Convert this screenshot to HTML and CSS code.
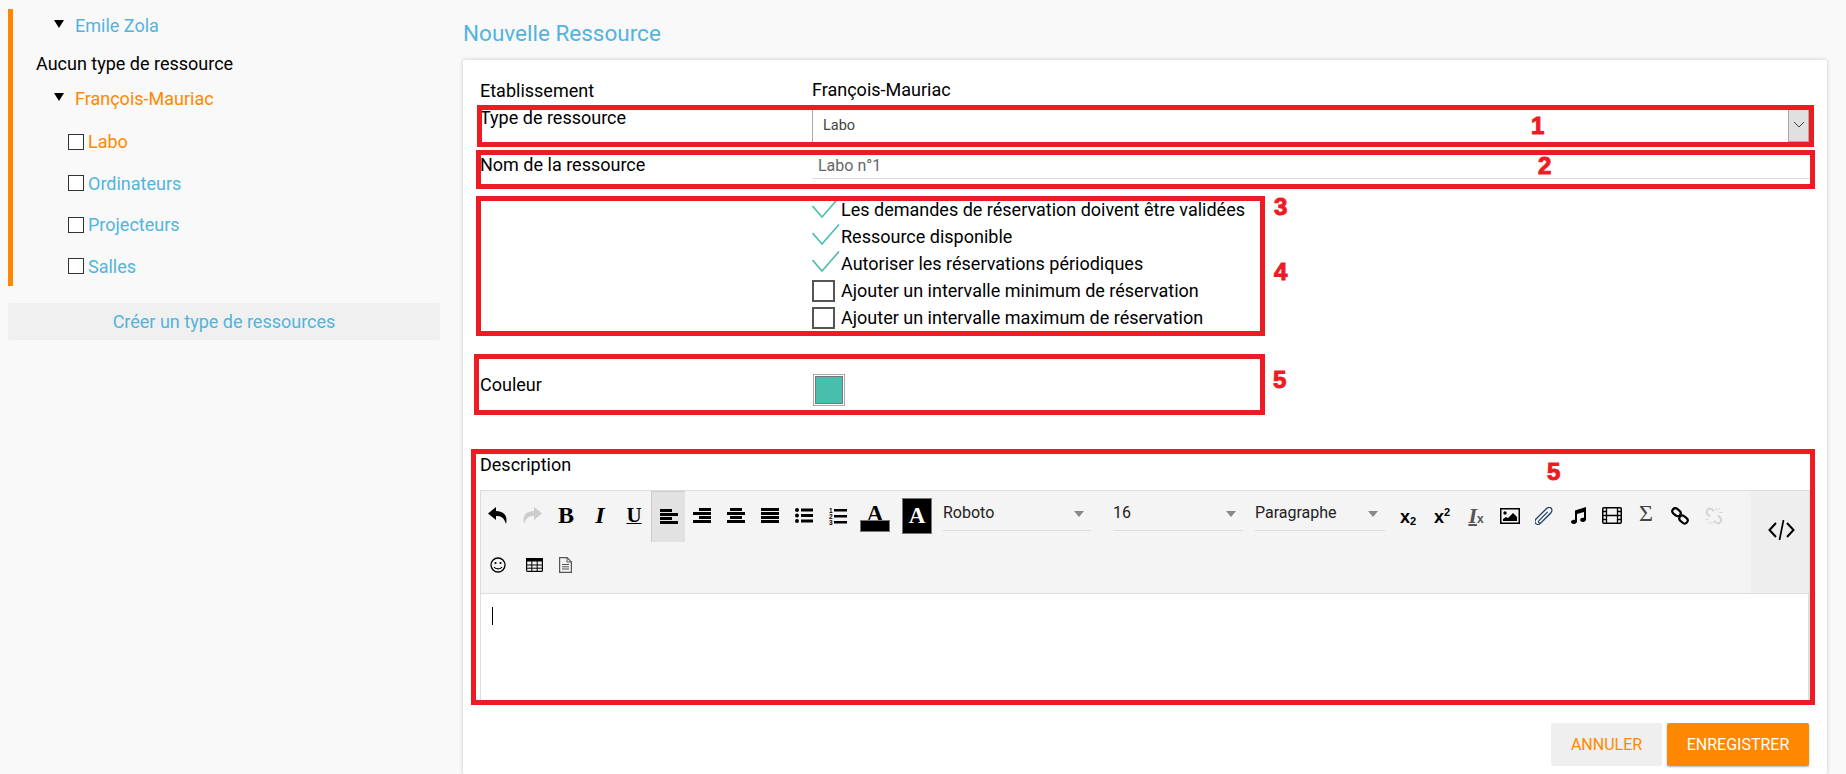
FILE: index.html
```html
<!DOCTYPE html>
<html lang="fr">
<head>
    <meta charset="UTF-8">
    <title>Nouvelle Ressource</title>
    <link rel="stylesheet" href="styles.css">
</head>
<body>

<div class="sidebar">
    <div class="tree">
        <div class="tree-struct"><span class="arrow"></span><a class="link">Emile Zola</a></div>
        <div class="tree-none">Aucun type de ressource</div>
        <div class="tree-struct second"><span class="arrow"></span><a class="link active">François-Mauriac</a></div>
        <div class="tree-type"><span class="box"></span><a class="link active">Labo</a></div>
        <div class="tree-type"><span class="box"></span><a class="link">Ordinateurs</a></div>
        <div class="tree-type"><span class="box"></span><a class="link">Projecteurs</a></div>
        <div class="tree-type"><span class="box"></span><a class="link">Salles</a></div>
    </div>
    <div class="create-type">Créer un type de ressources</div>
</div>

<div class="main">
    <h1>Nouvelle Ressource</h1>
    <div class="card">
        <div class="row row-etab">
            <label>Etablissement</label>
            <div class="etab-name">François-Mauriac</div>
        </div>
        <div class="row row-type">
            <label>Type de ressource</label>
            <div class="select">
                <span class="select-val">Labo</span>
                <span class="select-btn">
                    <svg width="12" height="7" viewBox="0 0 12 7"><path d="M1 1l5 5 5-5" fill="none" stroke="#444" stroke-width="1"/></svg>
                </span>
            </div>
        </div>
        <div class="row row-name">
            <label>Nom de la ressource</label>
            <input class="name-input" type="text" value="Labo n°1">
        </div>
        <div class="row checks">
            <div></div>
            <div>
                <div class="check"><svg class="tick" viewBox="0 0 28 21"><path d="M.5 9L10 20 27 .5" fill="none" stroke="#4abdac" stroke-width="1.600"/></svg><span>Les demandes de réservation doivent être validées</span></div>
                <div class="check"><svg class="tick" viewBox="0 0 28 21"><path d="M.5 9L10 20 27 .5" fill="none" stroke="#4abdac" stroke-width="1.600"/></svg><span>Ressource disponible</span></div>
                <div class="check"><svg class="tick" viewBox="0 0 28 21"><path d="M.5 9L10 20 27 .5" fill="none" stroke="#4abdac" stroke-width="1.600"/></svg><span>Autoriser les réservations périodiques</span></div>
                <div class="check"><span class="unchecked"></span><span>Ajouter un intervalle minimum de réservation</span></div>
                <div class="check"><span class="unchecked"></span><span>Ajouter un intervalle maximum de réservation</span></div>
            </div>
        </div>
        <div class="row row-color">
            <label>Couleur</label>
            <div class="swatch"><span></span></div>
        </div>
        <div class="desc-label">Description</div>

        <div class="editor">
            <div class="toolbar">
                <div class="tb-rows">
                    <div class="tb-row">
                        <span class="tb"><svg width="20" height="17" viewBox="0 0 20 17"><path d="M8 0L0 6.500 8 13V9c5 0 8 1.500 10 8 2-8-2-13-10-13z"/></svg></span>
                        <span class="tb"><svg width="20" height="17" viewBox="0 0 20 17"><path fill="#ccc" d="M12 0l8 6.500L12 13V9C7 9 4 10.500 2 17 0 9 4 4 12 4z"/></svg></span>
                        <span class="tb serif-b">B</span>
                        <span class="tb serif-i">I</span>
                        <span class="tb serif-u">U</span>
                        <span class="tb on"><svg width="18" height="15" viewBox="0 0 18 15"><path d="M0 0h12v3H0zM0 4h18v3H0zM0 8h12v3H0zM0 12h18v3H0z"/></svg></span>
                        <span class="tb"><svg width="18" height="15" viewBox="0 0 18 15"><path d="M6 0h12v3H6zM0 4h18v3H0zM6 8h12v3H6zM0 12h18v3H0z"/></svg></span>
                        <span class="tb"><svg width="18" height="15" viewBox="0 0 18 15"><path d="M3 0h12v3H3zM0 4h18v3H0zM3 8h12v3H3zM0 12h18v3H0z"/></svg></span>
                        <span class="tb"><svg width="18" height="15" viewBox="0 0 18 15"><path d="M0 0h18v3H0zM0 4h18v3H0zM0 8h18v3H0zM0 12h18v3H0z"/></svg></span>
                        <span class="tb"><svg width="18" height="15" viewBox="0 0 18 15"><circle cx="2" cy="2" r="2"/><circle cx="2" cy="7.500" r="2"/><circle cx="2" cy="13" r="2"/><path d="M6 .5h12v3H6zM6 6h12v3H6zM6 11.500h12v3H6z"/></svg></span>
                        <span class="tb"><svg width="18" height="18" viewBox="0 0 18 18"><text x="0" y="5.500" class="ol-num">1</text><text x="0" y="11.500" class="ol-num">2</text><text x="0" y="17.500" class="ol-num">3</text><path d="M5 2h13v2.500H5zM5 8h13v2.500H5zM5 14h13v2.500H5z"/></svg></span>
                        <span class="color-a"><span>A</span><i></i></span>
                        <span class="bg-a">A</span>
                        <span class="drop drop-font">Roboto</span>
                        <span class="drop drop-size">16</span>
                        <span class="drop drop-para">Paragraphe</span>
                        <span class="tb script"><span>x<sub>2</sub></span></span>
                        <span class="tb script"><span>x<sup>2</sup></span></span>
                        <span class="tb clear"><span class="clear-box"><b>I</b><i>x</i></span></span>
                        <span class="tb"><svg width="20" height="16" viewBox="0 0 20 16"><rect x=".75" y=".75" width="18.500" height="14.500" fill="none" stroke="#000" stroke-width="1.500"/><circle cx="5" cy="5" r="1.700"/><path d="M3 13v-2l3-2 2 1 5-5 4 4v4z"/></svg></span>
                        <span class="tb"><svg width="18" height="18" viewBox="2.500 .5 14.500 15"><path d="M15.500 5.500L6.800 14.200c-1.200 1.200-3 1.100-3.900.2-1-1-1-2.700.2-3.900L11.700 2c1.500-1.500 3.200-1.300 4-.5.900.9 1 2.600-.4 4L7.500 13.300c-.7.700-1.500.7-2 .2s-.4-1.200.3-1.900l7-7" fill="none" stroke="#1c3f66" stroke-width="1"/></svg></span>
                        <span class="tb"><svg width="16" height="17" viewBox="0 0 16 17"><path d="M5 3.500L16 0v12.500c0 1.500-1.500 2.500-3 2.500s-2.800-.7-2.800-2 1.300-2.200 2.800-2.200c.5 0 1 .1 1 .2V5L7 7v7.500C7 16 5.500 17 4 17s-3-.8-3-2 1.500-2.200 3-2.200c.5 0 .8.100 1 .2z"/></svg></span>
                        <span class="tb"><svg width="20" height="17" viewBox="0 0 20 17"><rect x=".75" y=".75" width="18.500" height="15.500" rx="1" fill="none" stroke="#000" stroke-width="1.500"/><path d="M4.500 1v15M15.500 1v15M1 8.500h18M1 4.500h3.500M1 12.500h3.500M15.500 4.500H19M15.500 12.500H19" stroke="#000" stroke-width="1.300"/></svg></span>
                        <span class="tb sigma">Σ</span>
                        <span class="tb"><svg width="18" height="18" viewBox="0 0 18 18"><g fill="none" stroke="#000" stroke-width="2.200"><rect x="1" y="2.200" width="9" height="6" rx="3" transform="rotate(40 5.500 5.200)"/><rect x="8" y="9.500" width="9" height="6" rx="3" transform="rotate(40 12.500 12.500)"/></g></svg></span>
                        <span class="tb"><svg width="18" height="18" viewBox="0 0 18 18"><g fill="none" stroke="#d6d6d6" stroke-width="2.200"><path d="M9 4L7 2.500a3.200 3.200 0 0 0-4.500 4.500L5 9.500"/><path d="M9 14l2 1.500a3.200 3.200 0 0 0 4.500-4.500L13 8.500"/></g><path d="M11 .5v3M14.500 1l-1.500 2.500M17.500 5.500h-3M.5 12.500h3M3.500 17l1.500-2.500M7 17.500v-3" stroke="#d6d6d6"/></svg></span>
                    </div>
                    <div class="tb-row">
                        <span class="tb"><svg width="16" height="16" viewBox="0 0 16 16"><circle cx="8" cy="8" r="7" fill="none" stroke="#000" stroke-width="1.300"/><circle cx="5.500" cy="6" r="1.100"/><circle cx="10.500" cy="6" r="1.100"/><path d="M4 10c1.500 2.500 6.500 2.500 8 0" fill="none" stroke="#000" stroke-width="1.200"/></svg></span>
                        <span class="tb tb-table"><svg width="17" height="14" viewBox="0 0 17 14"><rect x=".6" y=".6" width="15.800" height="12.800" rx="1" fill="none" stroke="#000" stroke-width="1.200"/><path d="M0 0h17v3.500H0z"/><path d="M1 7h15M1 10.200h15M5.800 3v10M11.200 3v10" stroke="#000"/></svg></span>
                        <span class="tb tb-doc"><svg width="13" height="16" viewBox="0 0 13 16"><path d="M.6.6h7.500l4.300 4.300v10.500H.6z" fill="none" stroke="#555" stroke-width="1.200"/><path d="M8 .6V5h4.400M3 7.500h7M3 9.800h7M3 12h7" fill="none" stroke="#555"/></svg></span>
                    </div>
                </div>
                <div class="tb-code"><svg width="27" height="20" viewBox="0 0 27 20"><path d="M8 3L1.500 10 8 17M19 3l6.500 7-6.500 7" fill="none" stroke="#000" stroke-width="2"/><path d="M15.500 0l-4 20" stroke="#000" stroke-width="1.700"/></svg></div>
            </div>
            <div class="editor-body"><span class="caret"></span></div>
        </div>

        <div class="actions">
            <button class="btn btn-cancel">ANNULER</button>
            <button class="btn btn-save">ENREGISTRER</button>
        </div>

        <!-- annotations drawn over the screen -->
        <div class="mark mark-1"></div>
        <div class="mark mark-2"></div>
        <div class="mark mark-3"></div>
        <div class="mark mark-4"></div>
        <div class="mark mark-5"></div>
        <span class="num num-1">1</span>
        <span class="num num-2">2</span>
        <span class="num num-3">3</span>
        <span class="num num-4">4</span>
        <span class="num num-5">5</span>
        <span class="num num-6">5</span>
    </div>
</div>

</body>
</html>
```

FILE: styles.css
```css
body {
    font-family: Roboto, sans-serif;
    font-size: 18px;
    margin: 0;
    height: 100vh;
    overflow: hidden;
    display: flex;
    background-color: #f9f9f9;
    color: #000;
}

.link {
    color: #52b4dc;
}

.link.active {
    color: #ff8800;
}

/* left tree */
.sidebar {
    width: 463px;
    flex-shrink: 0;
    padding: 9px 0 0 8px;
    box-sizing: border-box;
}

.tree {
    width: 432px;
    height: 277px;
    box-sizing: border-box;
    border-left: 5px solid #ff8800;
}

.tree-struct {
    display: flex;
    align-items: center;
    height: 34px;
    padding-left: 41px;
}

.tree-struct a {
    margin-top: -2px;
}

.tree-struct.second {
    margin: 8px 0 5px;
}

.arrow {
    width: 0;
    height: 0;
    border-left: 5px solid transparent;
    border-right: 5px solid transparent;
    border-top: 8px solid #000;
    margin-right: 11px;
    margin-top: -4px;
}

.tree-none {
    height: 20px;
    line-height: 20px;
    margin-top: 11px;
    padding-left: 23px;
}

.tree-type {
    display: flex;
    align-items: center;
    height: 41.500px;
    padding-left: 55px;
}

.box {
    width: 14px;
    height: 14px;
    border: 1px solid #333;
    background-color: #fff;
    margin-right: 4px;
}

.create-type {
    width: 432px;
    height: 37px;
    line-height: 37px;
    margin-top: 17px;
    text-align: center;
    color: #52b4dc;
    background-color: #f0f0f0;
    border-radius: 2px;
}

/* right part */
.main {
    flex: 1;
    display: flex;
    flex-direction: column;
    padding-right: 19px;
    min-width: 0;
}

h1 {
    font-size: 22.500px;
    font-weight: 400;
    color: #52b4dc;
    margin: 0;
    height: 60px;
    line-height: 66px;
}

.card {
    position: relative;
    flex: 1;
    background-color: #fff;
    padding: 20px 17px 0;
    box-shadow: 0 0 4px rgba(0, 0, 0, 0.2);
    border-radius: 2px;
}

.row {
    display: grid;
    grid-template-columns: 332px 1fr;
}

label {
    line-height: 22px;
}

.row-etab {
    height: 27px;
}

.etab-name {
    line-height: 20px;
}

.row-type {
    height: 46px;
}

.select {
    height: 32px;
    margin: 3px 1px 0 0;
    box-sizing: border-box;
    border-left: 1px solid #aaa;
    display: flex;
    justify-content: space-between;
    align-items: center;
    padding-left: 10px;
    font-size: 14.500px;
    color: #444;
}

.select-val {
    padding-bottom: 2px;
}

.select-btn {
    width: 21px;
    height: 32px;
    box-sizing: border-box;
    background-color: #e0e0e0;
    border: 1px solid #aaa;
    border-top: none;
    display: flex;
    justify-content: center;
    align-items: center;
    padding-bottom: 3px;
}

.row-name {
    height: 26px;
}

.row-name label {
    margin-top: 1px;
}

.name-input {
    font-family: Roboto, sans-serif;
    font-size: 16px;
    color: #666;
    height: 26px;
    box-sizing: border-box;
    border: none;
    border-bottom: 1px solid #ddd;
    padding: 0 0 0 6px;
    outline: none;
    width: 100%;
}

.checks {
    margin-top: 17px;
}

.check {
    height: 27px;
    display: flex;
    align-items: center;
}

.tick {
    width: 28px;
    height: 21px;
    margin-top: -5px;
    margin-right: 1px;
}

.unchecked {
    width: 23px;
    height: 22px;
    box-sizing: border-box;
    border: 2px solid #555;
    margin-right: 6px;
}

.row-color {
    margin-top: 43px;
}

.swatch {
    width: 32px;
    height: 32px;
    box-sizing: border-box;
    border: 1px solid #aaa;
    padding: 1px;
    margin-left: 1px;
}

.swatch span {
    display: block;
    height: 100%;
    box-sizing: border-box;
    background-color: #48bfad;
    border: 1px solid #777;
}

.desc-label {
    margin-top: 48px;
    line-height: 22px;
}

/* text editor */
.editor {
    margin-top: 14px;
    border: 1px solid #ddd;
    border-bottom: none;
}

.toolbar {
    display: flex;
    background-color: #f4f4f4;
    border-bottom: 1px solid #ddd;
}

.tb-rows {
    flex: 1;
}

.tb-row {
    display: flex;
    align-items: center;
    height: 51px;
}

.tb {
    width: 34px;
    height: 51px;
    flex-shrink: 0;
    display: flex;
    justify-content: center;
    align-items: center;
    box-sizing: border-box;
    padding-bottom: 2px;
}

.tb-row + .tb-row .tb {
    padding-bottom: 5px;
}

.tb.on {
    background-color: #e2e2e2;
    border-left: 1px solid #ccc;
    border-top: 1px solid #ccc;
}

.serif-b, .serif-i, .serif-u {
    font-family: "Liberation Serif", serif;
    font-size: 24px;
    font-weight: bold;
}

.serif-i {
    font-style: italic;
}

.serif-u {
    font-size: 21px;
    text-decoration: underline;
    text-decoration-thickness: 1px;
    text-underline-offset: 1px;
}

.ol-num {
    font-family: "Liberation Sans", sans-serif;
    font-size: 6.500px;
    font-weight: bold;
}

.color-a {
    width: 30px;
    height: 27px;
    margin: 3px 0 0 5px;
    flex-shrink: 0;
    display: flex;
    flex-direction: column;
    align-items: center;
    font-family: "Liberation Serif", serif;
    font-weight: bold;
    font-size: 23px;
    line-height: 17px;
}

.color-a span {
    height: 15px;
}

.color-a i {
    display: block;
    width: 100%;
    height: 12px;
    box-sizing: border-box;
    background-color: #000;
    border: 1px solid #777;
}

.bg-a {
    width: 30px;
    height: 36px;
    margin: -2px 0 0 12px;
    flex-shrink: 0;
    box-sizing: border-box;
    background-color: #000;
    border: 1px solid #777;
    color: #fff;
    font-family: "Liberation Serif", serif;
    font-weight: bold;
    font-size: 23px;
    display: flex;
    justify-content: center;
    align-items: center;
}

.drop {
    height: 34px;
    line-height: 32px;
    margin-bottom: 6px;
    box-sizing: border-box;
    border-bottom: 1px solid #ddd;
    flex-shrink: 0;
    font-size: 16px;
    color: #222;
    position: relative;
}

.drop::after {
    content: "";
    position: absolute;
    right: 7px;
    top: 14px;
    border-left: 5px solid transparent;
    border-right: 5px solid transparent;
    border-top: 6px solid #888;
}

.drop-font {
    width: 148px;
    margin-left: 11px;
}

.drop-size {
    width: 130px;
    margin-left: 22px;
}

.drop-para {
    width: 130px;
    margin: 0 6px 6px 12px;
}

.script {
    font-family: "Liberation Sans", sans-serif;
    font-weight: bold;
    font-size: 18px;
    padding-top: 3px;
}

.script sub, .script sup {
    font-size: 11px;
    line-height: 0;
}

.script sub {
    vertical-align: -2px;
}

.clear-box {
    font-family: "Liberation Serif", serif;
    color: #555;
    white-space: nowrap;
}

.clear-box b {
    font-style: italic;
    font-size: 22px;
    text-decoration: underline;
    text-decoration-thickness: 2px;
    text-underline-offset: 1px;
}

.clear-box i {
    font-family: "Liberation Sans", sans-serif;
    font-style: normal;
    font-weight: bold;
    font-size: 12px;
}

.sigma {
    font-family: "Liberation Serif", serif;
    font-size: 24px;
    color: #444;
    padding-bottom: 6px;
}

.tb-table {
    margin-left: 2px;
}

.tb-doc {
    margin-left: -3px;
}

.tb-code {
    width: 58px;
    background-color: #eee;
    display: flex;
    justify-content: center;
    align-items: center;
    padding: 0 0 25px 3px;
    box-sizing: border-box;
}

.editor-body {
    height: 95px;
    padding: 13px 11px 0;
    border-right: 1px solid #ddd;
}

.caret {
    display: block;
    width: 1px;
    height: 18px;
    background-color: #000;
}

.actions {
    display: flex;
    justify-content: flex-end;
    gap: 5px;
    margin: 21px 1px 0 0;
}

.btn {
    height: 43px;
    border: none;
    border-radius: 2px;
    font-family: Roboto, sans-serif;
    font-size: 16px;
    padding: 0;
}

.btn-cancel {
    width: 111px;
    background-color: #efefef;
    color: #ff8800;
}

.btn-save {
    width: 142px;
    background-color: #ff8800;
    color: #fff;
    box-shadow: 0 1px 2px rgba(0, 0, 0, 0.3);
}

/* red annotations */
.mark {
    position: absolute;
    box-sizing: border-box;
    border: 5px solid #ed1c24;
}

.mark-1 { left: 14px; top: 45px; width: 1337px; height: 42px; }
.mark-2 { left: 13px; top: 90px; width: 1339px; height: 39px; }
.mark-3 { left: 13px; top: 136px; width: 789px; height: 140px; }
.mark-4 { left: 11px; top: 294px; width: 791px; height: 61px; }
.mark-5 { left: 8px; top: 389px; width: 1344px; height: 256px; }

.num {
    position: absolute;
    font-family: "Liberation Sans", sans-serif;
    font-weight: bold;
    font-size: 24px;
    line-height: 24px;
    color: #ed1c24;
    -webkit-text-stroke: 1px #ed1c24;
}

.num-1 { left: 1068px; top: 54px; }
.num-2 { left: 1075px; top: 94px; }
.num-3 { left: 811px; top: 135px; }
.num-4 { left: 811px; top: 200px; }
.num-5 { left: 810px; top: 308px; }
.num-6 { left: 1084px; top: 400px; }
```
